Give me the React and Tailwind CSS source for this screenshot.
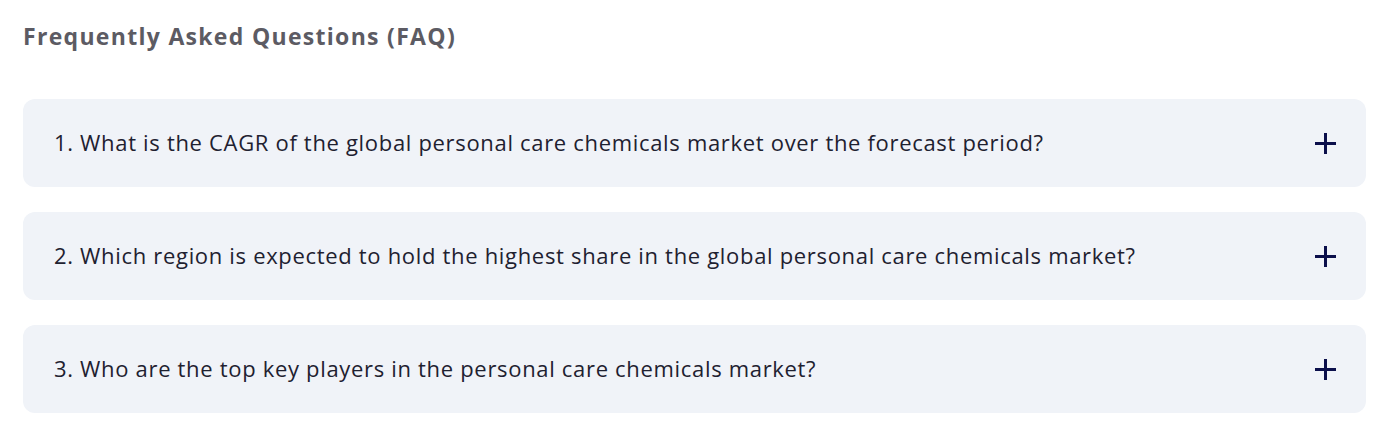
const questions = [
    "1. What is the CAGR of the global personal care chemicals market over the forecast period?",
    "2. Which region is expected to hold the highest share in the global personal care chemicals market?",
    "3. Who are the top key players in the personal care chemicals market?",
];

function PlusIcon() {
    return (
        <svg width="21" height="21" viewBox="0 0 21 21" className="shrink-0">
            <path d="M0 10.5h21M10.5 0v21" stroke="#0b0f4b" strokeWidth="3" />
        </svg>
    );
}

export default function App() {
    return (
        <div className="w-[1384px] h-[436px] bg-white px-[23px] pt-[20px]">
            <h2 className="text-[23px] leading-[32px] font-bold text-[#5c5b63] font-['Open_Sans',sans-serif] tracking-[1.3px]">
                Frequently Asked Questions (FAQ)
            </h2>

            <div className="mt-[47px] w-[1343px] flex flex-col gap-[25px]">
                {questions.map((q) => (
                    <div
                        key={q}
                        className="h-[88px] rounded-[12px] bg-[#f0f3f8] pl-[31px] pr-[30px] flex items-center justify-between"
                    >
                        <span className="mb-[3px] text-[22px] leading-[30px] tracking-[0.68px] text-[#1e2130] font-['Open_Sans',sans-serif]">
                            {q}
                        </span>
                        <PlusIcon />
                    </div>
                ))}
            </div>
        </div>
    );
}
